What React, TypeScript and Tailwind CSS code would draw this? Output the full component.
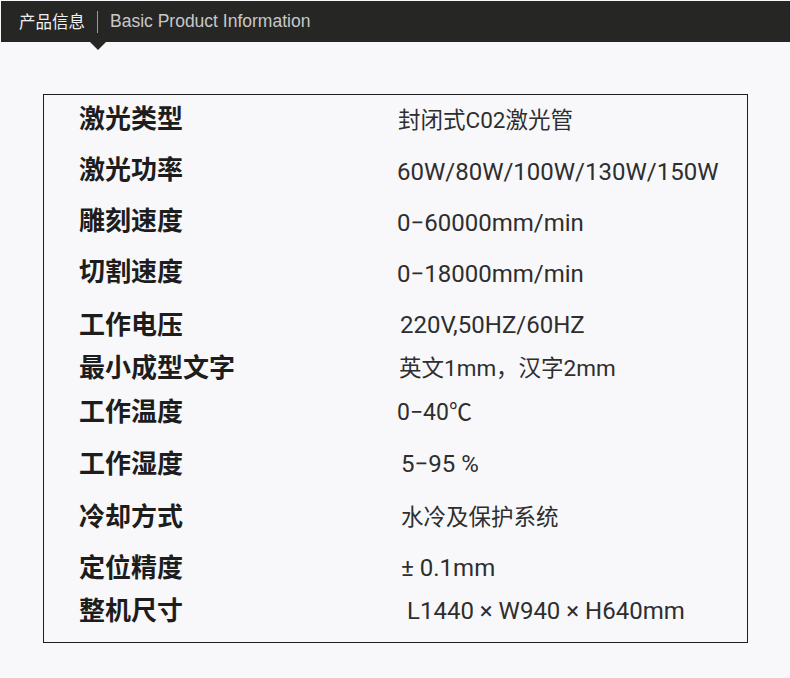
const specs = [
  { label: "激光类型", value: "封闭式C02激光管", h: "h-[51px]", lift: "mb-[8px]", val: "pl-[1px] text-[22.5px]" },
  { label: "激光功率", value: "60W/80W/100W/130W/150W", h: "h-[51px]", lift: "mb-[8px]", val: "pl-0 text-[24px]" },
  { label: "雕刻速度", value: "0−60000mm/min", h: "h-[51px]", lift: "mb-[8px]", val: "pl-0 text-[24px]" },
  { label: "切割速度", value: "0−18000mm/min", h: "h-[51px]", lift: "mb-[8px]", val: "pl-0 text-[24px]" },
  { label: "工作电压", value: "220V,50HZ/60HZ", h: "h-[52px]", lift: "mb-[4px]", val: "pl-[3px] text-[24px]" },
  { label: "最小成型文字", value: "英文1mm，汉字2mm", h: "h-[34px]", lift: "mb-[4px]", val: "pl-[2px] text-[22.5px]" },
  { label: "工作温度", value: "0−40℃", h: "h-[54px]", lift: "mb-[4px]", val: "pl-0 text-[23px]" },
  { label: "工作湿度", value: "5−95 %", h: "h-[50px]", lift: "mb-[4px]", val: "pl-[4px] text-[24px]" },
  { label: "冷却方式", value: "水冷及保护系统", h: "h-[56px]", lift: "mb-[4px]", val: "pl-[4px] text-[22.5px]" },
  { label: "定位精度", value: "± 0.1mm", h: "h-[46px]", lift: "mb-[4px]", val: "pl-[4px] text-[24px]" },
  { label: "整机尺寸", value: "L1440 × W940 × H640mm", h: "h-[40px]", lift: "mb-[4px]", val: "pl-[10px] text-[24px]" },
];

const App = () => {
  return (
    <div className="w-[790px] h-[678px] bg-[#f8f8fa] pt-px font-['Roboto','Noto_Sans_CJK_SC',sans-serif]">
      {/* Header */}
      <div className="relative h-[41px] ml-px bg-[#262725] flex items-center pl-[18px]">
        <span className="text-[16.5px] text-[#f0f0f0] leading-none font-['Noto_Sans_CJK_SC',sans-serif]">
          产品信息
        </span>
        <span className="mx-[12px] w-px h-[22px] bg-[#9a9a9a]" />
        <span className="text-[17.5px] text-[#c8c8c8] leading-none font-['Liberation_Sans',sans-serif]">
          Basic Product Information
        </span>
        <span className="absolute left-[89px] top-[41px] w-0 h-0 border-l-[8px] border-r-[8px] border-t-[8px] border-l-transparent border-r-transparent border-t-[#262725]" />
      </div>

      {/* Spec table */}
      <div className="ml-[43px] mt-[52px] w-[705px] h-[549px] border border-[#1f1f1f] pl-[35px]">
        {specs.map((row) => (
          <div key={row.label} className={`${row.h} flex items-center`}>
            <span
              className={`${row.lift} w-[318px] text-[26px] leading-none font-bold text-[#1d1d1d] font-['Noto_Sans_CJK_SC',sans-serif]`}
            >
              {row.label}
            </span>
            <span
              className={`${row.val} leading-none text-[#2e2e2e] font-['Roboto','Noto_Sans_CJK_SC',sans-serif]`}
            >
              {row.value}
            </span>
          </div>
        ))}
      </div>
    </div>
  );
};

export default App;
